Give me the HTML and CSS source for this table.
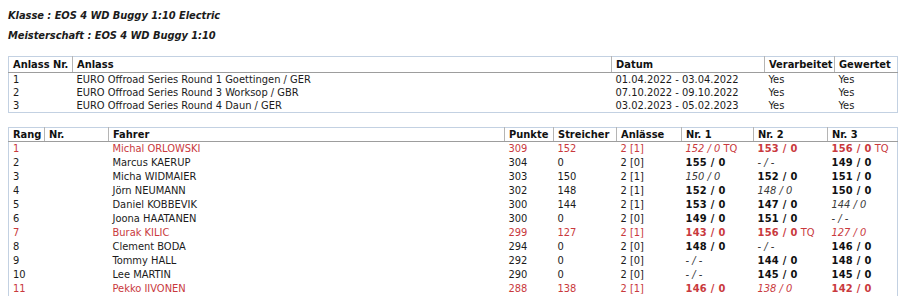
FILE: index.html
```html
<!DOCTYPE html>
<html>
<head>
<meta charset="utf-8">
<link rel="stylesheet" href="styles.css">
</head>
<body>
<div class="page">
  <p class="title">Klasse : EOS 4 WD Buggy 1:10 Electric</p>
  <p class="title">Meisterschaft : EOS 4 WD Buggy 1:10</p>

  <table class="grid events">
    <colgroup>
      <col class="w64"><col class="w539"><col class="w153"><col class="w70"><col class="w63">
    </colgroup>
    <thead>
      <tr><th>Anlass Nr.</th><th>Anlass</th><th>Datum</th><th>Verarbeitet</th><th>Gewertet</th></tr>
    </thead>
    <tbody>
      <tr><td>1</td><td>EURO Offroad Series Round 1 Goettingen / GER</td><td>01.04.2022 - 03.04.2022</td><td>Yes</td><td>Yes</td></tr>
      <tr><td>2</td><td>EURO Offroad Series Round 3 Worksop / GBR</td><td>07.10.2022 - 09.10.2022</td><td>Yes</td><td>Yes</td></tr>
      <tr><td>3</td><td>EURO Offroad Series Round 4 Daun / GER</td><td>03.02.2023 - 05.02.2023</td><td>Yes</td><td>Yes</td></tr>
    </tbody>
  </table>

  <table class="grid ranking">
    <colgroup>
      <col class="w36"><col class="w64"><col class="w396"><col class="w49"><col class="w63"><col class="w65"><col class="w72"><col class="w74"><col class="w70">
    </colgroup>
    <thead>
      <tr><th>Rang</th><th>Nr.</th><th>Fahrer</th><th>Punkte</th><th>Streicher</th><th>Anlässe</th><th>Nr. 1</th><th>Nr. 2</th><th>Nr. 3</th></tr>
    </thead>
    <tbody>
      <tr class="hl"><td>1</td><td></td><td>Michal ORLOWSKI</td><td>309</td><td>152</td><td>2 [1]</td><td><i>152 / 0</i> TQ</td><td><b>153 / 0</b></td><td><b>156 / 0</b> TQ</td></tr>
      <tr><td>2</td><td></td><td>Marcus KAERUP</td><td>304</td><td>0</td><td>2 [0]</td><td><b>155 / 0</b></td><td><i>- / -</i></td><td><b>149 / 0</b></td></tr>
      <tr><td>3</td><td></td><td>Micha WIDMAIER</td><td>303</td><td>150</td><td>2 [1]</td><td><i>150 / 0</i></td><td><b>152 / 0</b></td><td><b>151 / 0</b></td></tr>
      <tr><td>4</td><td></td><td>Jörn NEUMANN</td><td>302</td><td>148</td><td>2 [1]</td><td><b>152 / 0</b></td><td><i>148 / 0</i></td><td><b>150 / 0</b></td></tr>
      <tr><td>5</td><td></td><td>Daniel KOBBEVIK</td><td>300</td><td>144</td><td>2 [1]</td><td><b>153 / 0</b></td><td><b>147 / 0</b></td><td><i>144 / 0</i></td></tr>
      <tr><td>6</td><td></td><td>Joona HAATANEN</td><td>300</td><td>0</td><td>2 [0]</td><td><b>149 / 0</b></td><td><b>151 / 0</b></td><td><i>- / -</i></td></tr>
      <tr class="hl"><td>7</td><td></td><td>Burak KILIC</td><td>299</td><td>127</td><td>2 [1]</td><td><b>143 / 0</b></td><td><b>156 / 0</b> TQ</td><td><i>127 / 0</i></td></tr>
      <tr><td>8</td><td></td><td>Clement BODA</td><td>294</td><td>0</td><td>2 [0]</td><td><b>148 / 0</b></td><td><i>- / -</i></td><td><b>146 / 0</b></td></tr>
      <tr><td>9</td><td></td><td>Tommy HALL</td><td>292</td><td>0</td><td>2 [0]</td><td><i>- / -</i></td><td><b>144 / 0</b></td><td><b>148 / 0</b></td></tr>
      <tr><td>10</td><td></td><td>Lee MARTIN</td><td>290</td><td>0</td><td>2 [0]</td><td><i>- / -</i></td><td><b>145 / 0</b></td><td><b>145 / 0</b></td></tr>
      <tr class="hl"><td>11</td><td></td><td>Pekko IIVONEN</td><td>288</td><td>138</td><td>2 [1]</td><td><b>146 / 0</b></td><td><i>138 / 0</i></td><td><b>142 / 0</b></td></tr>
    </tbody>
  </table>
</div>
</body>
</html>
```

FILE: styles.css
```css
html, body {
  margin: 0;
  padding: 0;
  background: #ffffff;
}

.page {
  padding: 9px 3px 20px 8px;
  font-family: "DejaVu Sans Condensed", "DejaVu Sans", sans-serif;
  font-size: 11px;
  color: #1b1b1b;
}

.title {
  margin: 0 0 7px 0;
  height: 13px;
  line-height: 13px;
  font-weight: bold;
  font-style: italic;
  letter-spacing: -0.05px;
}

.title + .title {
  margin-bottom: 14px;
}

.grid {
  width: 889px;
  table-layout: fixed;
  border-collapse: collapse;
  border: 1px solid #c3d1e2;
}

.events {
  margin-bottom: 14px;
}

.grid th {
  text-align: left;
  font-weight: bold;
  color: #111;
  padding: 0 4px;
  height: 15px;
  line-height: 15px;
  border-left: 1px solid #b5b5b5;
  border-bottom: 1px solid #9d9d9d;
  white-space: nowrap;
  overflow: hidden;
}

.ranking th {
  height: 13px;
  line-height: 13px;
}

.grid th:first-child {
  border-left: 1px solid #c3d1e2;
}

.grid td {
  padding: 0 4px;
  height: 14px;
  line-height: 14px;
  white-space: nowrap;
  overflow: hidden;
}

.events td {
  height: 13px;
  line-height: 13px;
}

.grid td b {
  font-weight: bold;
  color: #111;
  letter-spacing: 0.3px;
}

.grid td i {
  font-style: italic;
  color: #3a3a3a;
}

.grid tr.hl td,
.grid tr.hl td b,
.grid tr.hl td i {
  color: #c9393d;
}

.w36 { width: 36px; }
.w49 { width: 49px; }
.w63 { width: 63px; }
.w64 { width: 64px; }
.w65 { width: 65px; }
.w70 { width: 70px; }
.w72 { width: 72px; }
.w74 { width: 74px; }
.w153 { width: 153px; }
.w396 { width: 396px; }
.w539 { width: 539px; }
```
